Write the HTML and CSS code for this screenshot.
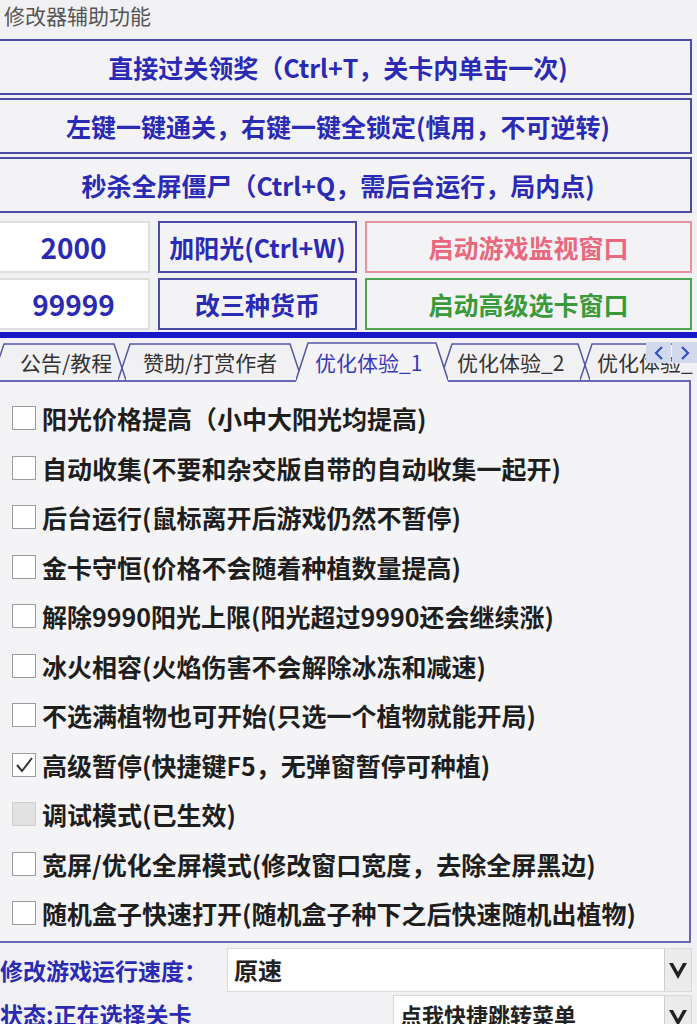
FILE: index.html
```html
<!DOCTYPE html>
<html lang="zh-CN">
<head>
<meta charset="utf-8">
<title>修改器辅助功能</title>
<link rel="stylesheet" href="styles.css">
</head>
<body>
<div class="app">
  <div class="title">修改器辅助功能</div>

  <div class="actions">
    <div class="btn wide">直接过关领奖（Ctrl+T，关卡内单击一次)</div>
    <div class="btn wide">左键一键通关，右键一键全锁定(慎用，不可逆转)</div>
    <div class="btn wide">秒杀全屏僵尸（Ctrl+Q，需后台运行，局内点)</div>
  </div>

  <div class="grid">
    <div class="num">2000</div>
    <div class="btn">加阳光(Ctrl+W)</div>
    <div class="btn pink">启动游戏监视窗口</div>
    <div class="num">99999</div>
    <div class="btn">改三种货币</div>
    <div class="btn green">启动高级选卡窗口</div>
  </div>

  <div class="rule"></div>

  <div class="tabs">
    <div class="tab t1">
      <svg class="tab-shape" width="134" height="37" viewBox="0 0 134 37"><polyline points="0,37 12,1 122,1 134,37"/></svg>
      <span class="tab-text">公告/教程</span>
    </div>
    <div class="tab t2">
      <svg class="tab-shape" width="184" height="37" viewBox="0 0 184 37"><polyline points="0,37 12,1 172,1 184,37"/></svg>
      <span class="tab-text">赞助/打赏作者</span>
    </div>
    <div class="tab t3 active">
      <svg class="tab-shape" width="152" height="40" viewBox="0 0 152 40"><polygon class="fill" points="0,40 12,1 140,1 152,40"/><polyline points="0,38 12,1 140,1 152,38"/></svg>
      <span class="tab-text">优化体验_1</span>
    </div>
    <div class="tab t4">
      <svg class="tab-shape" width="150" height="37" viewBox="0 0 150 37"><polyline points="0,37 12,1 138,1 150,37"/></svg>
      <span class="tab-text">优化体验_2</span>
    </div>
    <div class="tab t5">
      <svg class="tab-shape" width="130" height="37" viewBox="0 0 130 37"><polyline points="0,37 12,1 128,1"/></svg>
      <span class="tab-text">优化体验_</span>
    </div>
    <div class="scroller">
      <span class="scroll-btn"><svg width="12" height="14" viewBox="0 0 12 14"><polyline points="9,1 3,7 9,13"/></svg></span>
      <span class="scroll-btn"><svg width="12" height="14" viewBox="0 0 12 14"><polyline points="3,1 9,7 3,13"/></svg></span>
    </div>
  </div>

  <div class="panel">
    <div class="opt"><span class="box"></span><span>阳光价格提高（小中大阳光均提高)</span></div>
    <div class="opt"><span class="box"></span><span>自动收集(不要和杂交版自带的自动收集一起开)</span></div>
    <div class="opt"><span class="box"></span><span>后台运行(鼠标离开后游戏仍然不暂停)</span></div>
    <div class="opt"><span class="box"></span><span>金卡守恒(价格不会随着种植数量提高)</span></div>
    <div class="opt"><span class="box"></span><span>解除9990阳光上限(阳光超过9990还会继续涨)</span></div>
    <div class="opt"><span class="box"></span><span>冰火相容(火焰伤害不会解除冰冻和减速)</span></div>
    <div class="opt"><span class="box"></span><span>不选满植物也可开始(只选一个植物就能开局)</span></div>
    <div class="opt"><span class="box checked"><svg width="22" height="22" viewBox="0 0 22 22"><polyline points="4,11 9,17 19,4"/></svg></span><span>高级暂停(快捷键F5，无弹窗暂停可种植)</span></div>
    <div class="opt"><span class="box disabled"></span><span>调试模式(已生效)</span></div>
    <div class="opt"><span class="box"></span><span>宽屏/优化全屏模式(修改窗口宽度，去除全屏黑边)</span></div>
    <div class="opt"><span class="box"></span><span>随机盒子快速打开(随机盒子种下之后快速随机出植物)</span></div>
  </div>

  <div class="field">
    <div class="field-label speed">修改游戏运行速度：</div>
    <div class="combo">
      <span class="combo-text">原速</span>
      <span class="combo-arrow"><svg width="20" height="22" viewBox="0 0 20 22"><polygon points="1,4 10,20 19,4 15,4 10,13 5,4"/></svg></span>
    </div>
  </div>
  <div class="field second">
    <div class="field-label status">状态:正在选择关卡</div>
    <div class="combo">
      <span class="combo-text small">点我快捷跳转菜单</span>
      <span class="combo-arrow"><svg width="20" height="22" viewBox="0 0 20 22"><polygon points="1,4 10,20 19,4 15,4 10,13 5,4"/></svg></span>
    </div>
  </div>
</div>
</body>
</html>
```

FILE: styles.css
```css
html, body {
  margin: 0;
  height: 1024px;
  overflow: hidden;
}

body {
  background: #f1f1f3;
  font-family: "Noto Sans CJK SC", "Noto Sans", sans-serif;
}

.app {
  width: 697px;
}

.title {
  height: 30px;
  line-height: 30px;
  padding-left: 4px;
  font-size: 21px;
  color: #555;
}

.actions {
  display: flex;
  flex-direction: column;
  gap: 3px;
  margin: 9px 5px 0 -2px;
}

.btn {
  display: flex;
  align-items: center;
  justify-content: center;
  box-sizing: border-box;
  border: 2px solid #4b4ba6;
  background: #f3f3f6;
  color: #2a2ab4;
  font-weight: 700;
  font-size: 25px;
  line-height: 1;
  white-space: nowrap;
}

.wide {
  height: 56px;
  padding-right: 14px;
}

.grid {
  display: grid;
  grid-template-columns: 153px 199px 327px;
  grid-template-rows: 52px 52px;
  column-gap: 8px;
  row-gap: 5px;
  margin: 8px 0 0 -3px;
}

.num {
  display: flex;
  align-items: center;
  justify-content: center;
  box-sizing: border-box;
  background: #fff;
  border: 2px solid #dedede;
  color: #2a2ab4;
  font-weight: 700;
  font-size: 28px;
  line-height: 1;
}

.pink {
  border-color: #e8919f;
  color: #e8687e;
}

.green {
  border-color: #4ea54e;
  color: #3a9a3a;
}

.rule {
  height: 6px;
  margin-top: 2px;
  background: #1818c8;
}

.tabs {
  position: relative;
  display: flex;
  align-items: flex-end;
  height: 42px;
  margin-left: -8px;
}

.tab {
  position: relative;
  flex: none;
  display: flex;
  align-items: center;
  height: 37px;
  box-sizing: border-box;
  font-size: 21px;
  color: #333;
  white-space: nowrap;
}

.tab-shape {
  position: absolute;
  left: 0;
  top: 0;
}

.tab-shape polyline {
  fill: none;
  stroke: #5555a6;
  stroke-width: 1.5;
}

.tab-shape .fill {
  fill: #f4f4f6;
}

.tab-text {
  position: relative;
}

.t1 { width: 134px; padding-left: 28px; margin-left: 0; }
.t2 { width: 184px; padding-left: 25px; margin-left: -8px; }
.t3 { width: 152px; padding-left: 19px; margin-left: -6px; }
.t4 { width: 150px; padding-left: 17px; margin-left: -8px; }
.t5 { width: 130px; padding-left: 17px; margin-left: -10px; }

.active {
  height: 40px;
  margin-bottom: -2px;
  z-index: 2;
  color: #3a3ab8;
}

.scroller {
  position: absolute;
  right: 0;
  top: 4px;
  display: flex;
  gap: 1px;
  z-index: 3;
}

.scroll-btn {
  display: flex;
  align-items: center;
  justify-content: center;
  width: 25px;
  height: 21px;
  background: #d3d9ec;
}

.scroll-btn polyline {
  fill: none;
  stroke: #3050c8;
  stroke-width: 2.2;
}

.panel {
  box-sizing: border-box;
  width: 691px;
  border: 2px solid #6767b5;
  border-left: none;
  background: #f4f4f6;
  padding: 11.25px 0 3px 12px;
}

.opt {
  display: flex;
  align-items: center;
  gap: 6px;
  height: 49.5px;
  font-size: 25px;
  font-weight: 700;
  color: #1e1e1e;
  white-space: nowrap;
}

.box {
  flex: none;
  display: flex;
  align-items: center;
  justify-content: center;
  box-sizing: border-box;
  width: 24px;
  height: 24px;
  background: #fff;
  border: 1px solid #9c9c9c;
}

.box.checked polyline {
  fill: none;
  stroke: #333;
  stroke-width: 2;
}

.box.disabled {
  background: #e2e2e2;
  border-color: #cfcfcf;
}

.field {
  display: flex;
  height: 44px;
  margin: 5px 5px 0 0;
}

.field.second {
  margin-top: 3px;
}

.field-label {
  flex: none;
  display: flex;
  align-items: center;
  font-size: 23px;
  font-weight: 700;
  color: #2a2ab4;
  white-space: nowrap;
}

.field-label.speed {
  width: 227px;
}

.field-label.status {
  width: 393px;
  align-items: flex-start;
  padding-top: 2px;
  box-sizing: border-box;
}

.combo {
  flex: 1;
  display: flex;
  box-sizing: border-box;
  background: #fff;
  border: 1px solid #dadada;
}

.combo-text {
  flex: 1;
  display: flex;
  align-items: center;
  padding-left: 6px;
  font-size: 24px;
  font-weight: 700;
  color: #222;
}

.combo-text.small {
  font-size: 22px;
  align-items: flex-start;
  padding-top: 2px;
}

.combo-arrow {
  flex: none;
  display: flex;
  align-items: center;
  justify-content: center;
  width: 26px;
  background: #ebebeb;
  border-left: 1px solid #cdcdcd;
}

.combo-arrow polygon {
  fill: #222;
}
```
